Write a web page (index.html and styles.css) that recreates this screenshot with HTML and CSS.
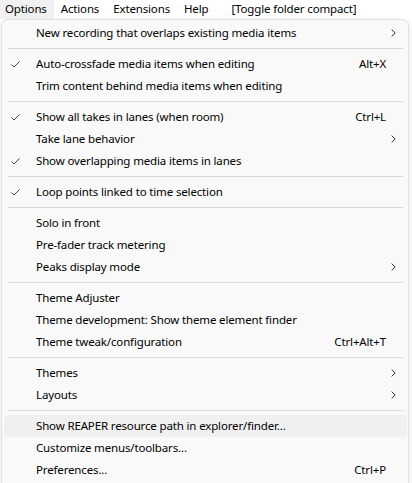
FILE: index.html
```html
<!DOCTYPE html>
<html>
<head>
<meta charset="utf-8">
<link rel="stylesheet" href="styles.css">
</head>
<body>
<div class="menubar">
  <span class="mb-item active">Options</span>
  <span class="mb-item">Actions</span>
  <span class="mb-item">Extensions</span>
  <span class="mb-item">Help</span>
  <span class="mb-item toggle">[Toggle folder compact]</span>
</div>
<div class="menu">
  <div class="row"><span class="chk"></span><span class="lbl">New recording that overlaps existing media items</span><span class="sc"></span><span class="arr"><svg width="5" height="8" viewBox="0 0 5 8"><path d="M0.6 0.5 L4.2 4 L0.6 7.5" fill="none" stroke="#333" stroke-width="1"/></svg></span></div>
  <div class="sep"></div>
  <div class="row"><span class="chk"><svg width="9" height="7" viewBox="0 0 9 7"><path d="M0.5 3.5 L3 6 L8.5 0.5" fill="none" stroke="#444" stroke-width="1"/></svg></span><span class="lbl">Auto-crossfade media items when editing</span><span class="sc">Alt+X</span><span class="arr"></span></div>
  <div class="row"><span class="chk"></span><span class="lbl">Trim content behind media items when editing</span><span class="sc"></span><span class="arr"></span></div>
  <div class="sep"></div>
  <div class="row"><span class="chk"><svg width="9" height="7" viewBox="0 0 9 7"><path d="M0.5 3.5 L3 6 L8.5 0.5" fill="none" stroke="#444" stroke-width="1"/></svg></span><span class="lbl">Show all takes in lanes (when room)</span><span class="sc">Ctrl+L</span><span class="arr"></span></div>
  <div class="row"><span class="chk"></span><span class="lbl">Take lane behavior</span><span class="sc"></span><span class="arr"><svg width="5" height="8" viewBox="0 0 5 8"><path d="M0.6 0.5 L4.2 4 L0.6 7.5" fill="none" stroke="#333" stroke-width="1"/></svg></span></div>
  <div class="row"><span class="chk"><svg width="9" height="7" viewBox="0 0 9 7"><path d="M0.5 3.5 L3 6 L8.5 0.5" fill="none" stroke="#444" stroke-width="1"/></svg></span><span class="lbl">Show overlapping media items in lanes</span><span class="sc"></span><span class="arr"></span></div>
  <div class="sep"></div>
  <div class="row"><span class="chk"><svg width="9" height="7" viewBox="0 0 9 7"><path d="M0.5 3.5 L3 6 L8.5 0.5" fill="none" stroke="#444" stroke-width="1"/></svg></span><span class="lbl">Loop points linked to time selection</span><span class="sc"></span><span class="arr"></span></div>
  <div class="sep"></div>
  <div class="row"><span class="chk"></span><span class="lbl">Solo in front</span><span class="sc"></span><span class="arr"></span></div>
  <div class="row"><span class="chk"></span><span class="lbl">Pre-fader track metering</span><span class="sc"></span><span class="arr"></span></div>
  <div class="row"><span class="chk"></span><span class="lbl">Peaks display mode</span><span class="sc"></span><span class="arr"><svg width="5" height="8" viewBox="0 0 5 8"><path d="M0.6 0.5 L4.2 4 L0.6 7.5" fill="none" stroke="#333" stroke-width="1"/></svg></span></div>
  <div class="sep"></div>
  <div class="row"><span class="chk"></span><span class="lbl">Theme Adjuster</span><span class="sc"></span><span class="arr"></span></div>
  <div class="row"><span class="chk"></span><span class="lbl">Theme development: Show theme element finder</span><span class="sc"></span><span class="arr"></span></div>
  <div class="row"><span class="chk"></span><span class="lbl">Theme tweak/configuration</span><span class="sc">Ctrl+Alt+T</span><span class="arr"></span></div>
  <div class="sep"></div>
  <div class="row"><span class="chk"></span><span class="lbl">Themes</span><span class="sc"></span><span class="arr"><svg width="5" height="8" viewBox="0 0 5 8"><path d="M0.6 0.5 L4.2 4 L0.6 7.5" fill="none" stroke="#333" stroke-width="1"/></svg></span></div>
  <div class="row"><span class="chk"></span><span class="lbl">Layouts</span><span class="sc"></span><span class="arr"><svg width="5" height="8" viewBox="0 0 5 8"><path d="M0.6 0.5 L4.2 4 L0.6 7.5" fill="none" stroke="#333" stroke-width="1"/></svg></span></div>
  <div class="sep"></div>
  <div class="row hover"><span class="chk"></span><span class="lbl">Show REAPER resource path in explorer/finder...</span><span class="sc"></span><span class="arr"></span></div>
  <div class="row"><span class="chk"></span><span class="lbl">Customize menus/toolbars...</span><span class="sc"></span><span class="arr"></span></div>
  <div class="row"><span class="chk"></span><span class="lbl">Preferences...</span><span class="sc">Ctrl+P</span><span class="arr"></span></div>
</div>
</body>
</html>
```
FILE: styles.css
```css
html, body {
  margin: 0;
  padding: 0;
  background: #ffffff;
  font-family: "Segoe UI", "Noto Sans", sans-serif;
  font-size: 11.5px;
  letter-spacing: -0.15px;
  color: #000;
  overflow: hidden;
}
.menubar {
  display: flex;
  height: 19px;
  align-items: center;
  background: #ffffff;
}
.mb-item {
  padding: 0 7px;
  height: 19px;
  line-height: 18px;
  white-space: nowrap;
}
.mb-item:first-child {
  padding-left: 5px;
}
.mb-item.active {
  background: #f0f0f0;
}
.mb-item.toggle {
  margin-left: 9px;
}
.menu {
  box-sizing: border-box;
  margin-left: 1px;
  width: 408px;
  background: #f9f9f9;
  border: 1px solid #e2e2e2;
  border-radius: 7px;
  box-shadow: 0 2px 6px rgba(0,0,0,0.12);
  padding: 2px 1px 4px 2px;
  height: 480px;
}
.row {
  display: grid;
  grid-template-columns: 32px 1fr auto 21px;
  align-items: center;
  height: 22px;
  border-radius: 4px;
  white-space: nowrap;
}
.row.hover {
  background: #f0f0f0;
}
.chk {
  display: flex;
  align-items: center;
  padding-left: 7px;
}
.lbl {
  line-height: 22px;
}
.sc {
  line-height: 22px;
}
.arr {
  display: flex;
  align-items: center;
  padding-left: 5px;
}
.sep {
  height: 1px;
  margin: 4px 4px 4px 4px;
  background: #d9d9d9;
}
```
